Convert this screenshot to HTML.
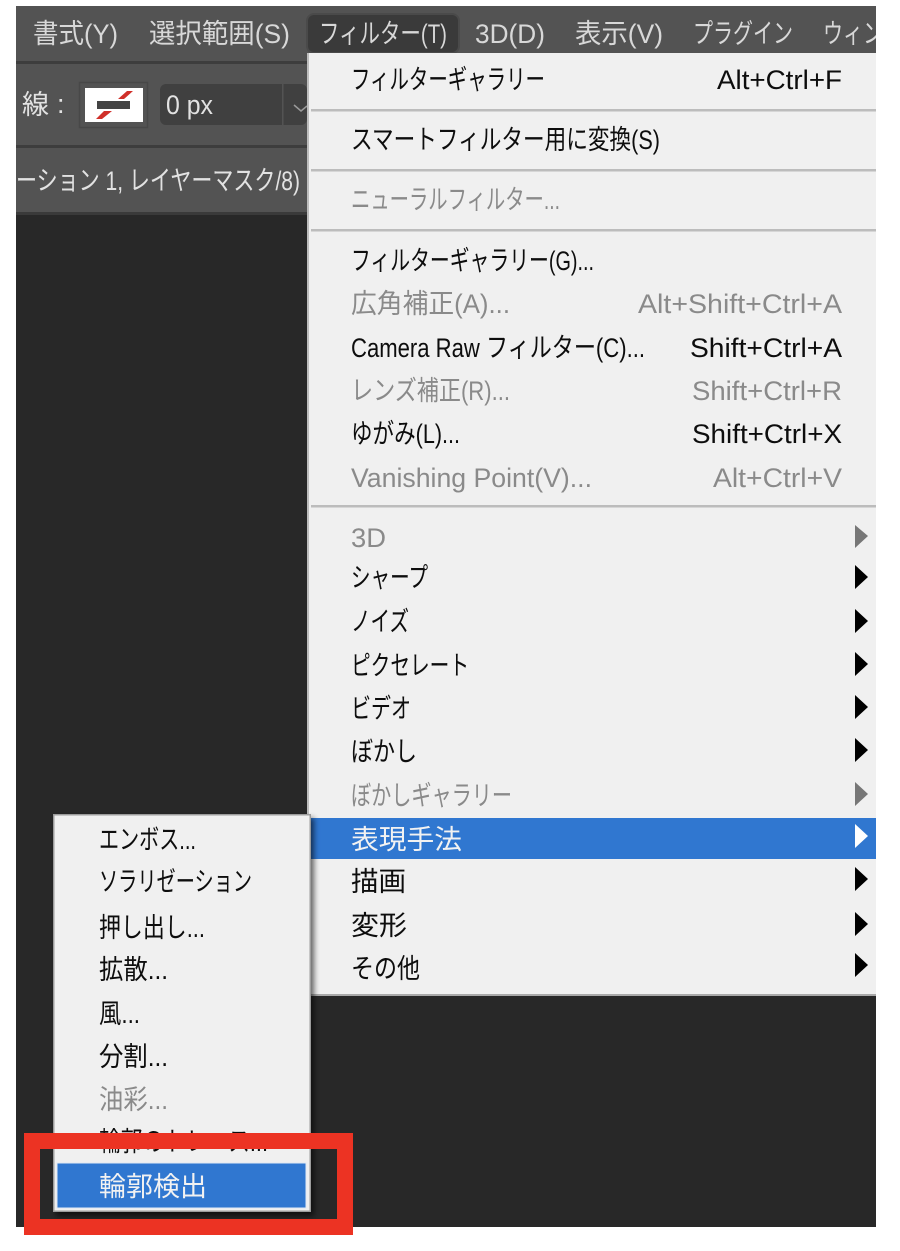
<!DOCTYPE html>
<html lang="ja"><head><meta charset="utf-8"><style>
html,body{margin:0;padding:0;background:#fff;width:900px;height:1251px;overflow:hidden}
svg{display:block}
text{font-family:"Liberation Sans","Noto Sans CJK JP",sans-serif;font-size:27px;fill:#0c0c0c}
.g{fill:#8a8a8a}.w{fill:#f2f2f2}.l{fill:#d8d8d8}.t{fill:#e2e2e2}
</style></head><body>
<svg width="900" height="1251" viewBox="0 0 900 1251" xmlns="http://www.w3.org/2000/svg">
<defs>
<clipPath id="c"><rect x="16" y="6" width="860" height="1221"/></clipPath>
<filter id="s" x="-10%" y="-10%" width="125%" height="125%"><feGaussianBlur stdDeviation="3"/></filter>
<filter id="b"><feGaussianBlur stdDeviation="0.35"/></filter>
</defs>
<g clip-path="url(#c)">
<rect x="16" y="6" width="860" height="1221" fill="#282828"/>
<rect x="16" y="6" width="860" height="56" fill="#535353"/>
<rect x="16" y="61" width="860" height="3" fill="#3d3d3d"/>
<rect x="16" y="64" width="860" height="82" fill="#535353"/>
<rect x="16" y="145" width="860" height="3" fill="#3d3d3d"/>
<rect x="16" y="148" width="860" height="64" fill="#535353"/>
<rect x="16" y="212" width="860" height="3" fill="#3a3a3a"/>
<rect x="307" y="14" width="152" height="39" rx="7" fill="#3a3a3a" stroke="#4a4a4a" stroke-width="2"/>
<rect x="79.500" y="82.500" width="68" height="45" fill="none" stroke="#484848" stroke-width="1.500"/>
<rect x="85" y="88" width="58" height="34" fill="#fff"/>
<polygon points="127,91 133,91 124,99 118,99" fill="#d0302a"/>
<polygon points="104,111 112,111 102,119 96,119" fill="#d0302a"/>
<rect x="97" y="101" width="33" height="8" fill="#444"/>
<rect x="160" y="84" width="147" height="41" rx="6" fill="#404040"/>
<rect x="282" y="84" width="1.500" height="41" fill="#535353"/>
<path d="M294 105l7 6 6-5" fill="none" stroke="#9a9a9a" stroke-width="1.500"/>
<g filter="url(#b)">
<text class="l" x="33" y="43" textLength="85" lengthAdjust="spacingAndGlyphs">書式(Y)</text>
<text class="l" x="149" y="43" textLength="141" lengthAdjust="spacingAndGlyphs">選択範囲(S)</text>
<text class="l" x="319" y="43" textLength="128" lengthAdjust="spacingAndGlyphs">フィルター(T)</text>
<text class="l" x="475" y="43" textLength="70" lengthAdjust="spacingAndGlyphs">3D(D)</text>
<text class="l" x="575" y="43" textLength="88" lengthAdjust="spacingAndGlyphs">表示(V)</text>
<text class="l" x="693" y="43" textLength="100" lengthAdjust="spacingAndGlyphs">プラグイン</text>
<text class="l" x="823" y="43" textLength="60" lengthAdjust="spacingAndGlyphs">ウィン</text>
<text class="t" x="22" y="114">線</text>
<text class="t" x="57" y="113">:</text>
<text class="t" x="166" y="114" textLength="47" lengthAdjust="spacingAndGlyphs">0 px</text>
<text class="t" x="16" y="190" textLength="284" lengthAdjust="spacingAndGlyphs">ーション 1, レイヤーマスク/8)</text>
</g>

<rect x="307" y="53" width="575" height="942" fill="#f0f0f0"/>
<rect x="307" y="53" width="2" height="942" fill="#bdbdbd"/>
<rect x="307" y="994" width="569" height="2" fill="#a9a9a9"/>
<rect x="311" y="109" width="565" height="2.500" fill="#bcbcbc"/>
<rect x="311" y="169" width="565" height="2.500" fill="#bcbcbc"/>
<rect x="311" y="229" width="565" height="2.500" fill="#bcbcbc"/>
<rect x="311" y="505" width="565" height="2.500" fill="#bcbcbc"/>
<rect x="311" y="818" width="565" height="41" fill="#3077d0"/>
<g filter="url(#b)">
<text x="351" y="89" textLength="194" lengthAdjust="spacingAndGlyphs">フィルターギャラリー</text>
<text x="717" y="89" textLength="125" lengthAdjust="spacingAndGlyphs">Alt+Ctrl+F</text>
<text x="351" y="149" textLength="309" lengthAdjust="spacingAndGlyphs">スマートフィルター用に変換(S)</text>
<text class="g" x="351" y="209" textLength="209" lengthAdjust="spacingAndGlyphs">ニューラルフィルター...</text>
<text x="351" y="270" textLength="243" lengthAdjust="spacingAndGlyphs">フィルターギャラリー(G)...</text>
<text class="g" x="351" y="313" textLength="159" lengthAdjust="spacingAndGlyphs">広角補正(A)...</text>
<text class="g" x="638" y="313" textLength="204" lengthAdjust="spacingAndGlyphs">Alt+Shift+Ctrl+A</text>
<text x="351" y="357" textLength="294" lengthAdjust="spacingAndGlyphs">Camera Raw フィルター(C)...</text>
<text x="690" y="357" textLength="152" lengthAdjust="spacingAndGlyphs">Shift+Ctrl+A</text>
<text class="g" x="351" y="400" textLength="159" lengthAdjust="spacingAndGlyphs">レンズ補正(R)...</text>
<text class="g" x="692" y="400" textLength="150" lengthAdjust="spacingAndGlyphs">Shift+Ctrl+R</text>
<text x="351" y="443" textLength="109" lengthAdjust="spacingAndGlyphs">ゆがみ(L)...</text>
<text x="692" y="443" textLength="150" lengthAdjust="spacingAndGlyphs">Shift+Ctrl+X</text>
<text class="g" x="351" y="487" textLength="241" lengthAdjust="spacingAndGlyphs">Vanishing Point(V)...</text>
<text class="g" x="713" y="487" textLength="129" lengthAdjust="spacingAndGlyphs">Alt+Ctrl+V</text>
<text class="g" x="351" y="547" textLength="35" lengthAdjust="spacingAndGlyphs">3D</text>
<text x="351" y="587" textLength="77" lengthAdjust="spacingAndGlyphs">シャープ</text>
<text x="351" y="631" textLength="58" lengthAdjust="spacingAndGlyphs">ノイズ</text>
<text x="351" y="675" textLength="118" lengthAdjust="spacingAndGlyphs">ピクセレート</text>
<text x="351" y="718" textLength="60" lengthAdjust="spacingAndGlyphs">ビデオ</text>
<text x="351" y="761" textLength="66" lengthAdjust="spacingAndGlyphs">ぼかし</text>
<text class="g" x="351" y="805" textLength="161" lengthAdjust="spacingAndGlyphs">ぼかしギャラリー</text>
<text class="w" x="351" y="849" textLength="111" lengthAdjust="spacingAndGlyphs">表現手法</text>
<text x="351" y="891" textLength="55" lengthAdjust="spacingAndGlyphs">描画</text>
<text x="351" y="935" textLength="56" lengthAdjust="spacingAndGlyphs">変形</text>
<text x="351" y="978" textLength="69" lengthAdjust="spacingAndGlyphs">その他</text>
</g>
<g>
<polygon points="855,525 868,536 855,548" fill="#777"/>
<polygon points="855,565 868,577 855,589" fill="#000"/>
<polygon points="855,609 868,621 855,633" fill="#000"/>
<polygon points="855,652 868,664 855,676" fill="#000"/>
<polygon points="855,695 868,707 855,719" fill="#000"/>
<polygon points="855,738 868,750 855,762" fill="#000"/>
<polygon points="855,782 868,794 855,806" fill="#777"/>
<polygon points="855,824 868,836 855,848" fill="#fff"/>
<polygon points="855,867 868,879 855,891" fill="#000"/>
<polygon points="855,912 868,924 855,936" fill="#000"/>
<polygon points="855,953 868,965 855,977" fill="#000"/>
</g>

<rect x="56" y="818" width="258" height="398" fill="#000" opacity=".6" filter="url(#s)"/>
<rect x="53" y="814" width="258" height="398" fill="#f0f0f0"/>
<rect x="53.750" y="814.750" width="256.500" height="396.500" fill="none" stroke="#9c9c9c" stroke-width="1.500"/>
<rect x="57" y="1163" width="249" height="45" fill="#3077d0"/>
<rect x="57" y="1163" width="249" height="45" fill="none" stroke="#dfe8f3" stroke-width="1"/>
<g filter="url(#b)">
<text x="99" y="849" textLength="97" lengthAdjust="spacingAndGlyphs">エンボス...</text>
<text x="99" y="891" textLength="153" lengthAdjust="spacingAndGlyphs">ソラリゼーション</text>
<text x="99" y="937" textLength="106" lengthAdjust="spacingAndGlyphs">押し出し...</text>
<text x="99" y="979" textLength="69" lengthAdjust="spacingAndGlyphs">拡散...</text>
<text x="99" y="1023" textLength="41" lengthAdjust="spacingAndGlyphs">風...</text>
<text x="99" y="1066" textLength="69" lengthAdjust="spacingAndGlyphs">分割...</text>
<text class="g" x="99" y="1109" textLength="69" lengthAdjust="spacingAndGlyphs">油彩...</text>
<text x="99" y="1151" textLength="169" lengthAdjust="spacingAndGlyphs">輪郭のトレース...</text>
<text class="w" x="99" y="1196" textLength="108" lengthAdjust="spacingAndGlyphs">輪郭検出</text>
</g>
</g>
<path d="M32 1141H345V1227H32Z" fill="none" stroke="#ec3323" stroke-width="16"/>
</svg>
</body></html>
